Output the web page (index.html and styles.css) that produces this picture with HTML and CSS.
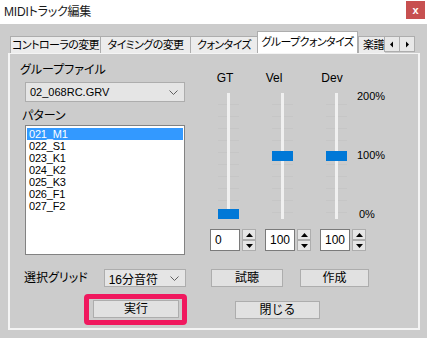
FILE: index.html
```html
<!DOCTYPE html>
<html lang="ja">
<head>
    <meta charset="UTF-8">
    <meta name="viewport" content="width=device-width, initial-scale=1.0">
    <title>MIDIトラック編集</title>
    <link rel="stylesheet" href="styles.css">
</head>
<body>
    <div class="titlebar">
        <span class="title">MIDIトラック編集</span>
        <span class="close">x</span>
    </div>

    <div class="window-body">
        <div class="tabstrip">
            <div class="tabs">
                <div class="tab">コントローラの変更</div>
                <div class="tab">タイミングの変更</div>
                <div class="tab">クォンタイズ</div>
                <div class="tab active">グループクォンタイズ</div>
                <div class="tab">楽譜</div>
            </div>
            <div class="tab-scroll">
                <span class="scroll-btn"><svg width="6" height="7" viewBox="0 0 6 7"><polygon points="4,0.5 4,6.5 1,3.5" fill="#000"/></svg></span>
                <span class="scroll-btn"><svg width="6" height="7" viewBox="0 0 6 7"><polygon points="2,0.5 2,6.5 5,3.5" fill="#000"/></svg></span>
            </div>
        </div>

        <div class="panel">
            <div class="file-col">
                <div class="label">グループファイル</div>
                <div class="combo file-combo">
                    <span>02_068RC.GRV</span>
                    <svg width="9" height="5" viewBox="0 0 9 5"><polyline points="0.5,0.5 4.5,4.5 8.5,0.5" fill="none" stroke="#606060"/></svg>
                </div>
                <div class="label pattern-label">パターン</div>
                <ul class="pattern-list">
                    <li class="selected">021_M1</li>
                    <li>022_S1</li>
                    <li>023_K1</li>
                    <li>024_K2</li>
                    <li>025_K3</li>
                    <li>026_F1</li>
                    <li>027_F2</li>
                </ul>
            </div>

            <div class="slider-col">
                <div class="slider-labels">
                    <span class="slider-name">GT</span>
                    <span class="slider-name">Vel</span>
                    <span class="slider-name">Dev</span>
                </div>
                <div class="sliders">
                    <div class="slider"><span class="thumb" style="top: 116px"></span></div>
                    <div class="slider"><span class="thumb" style="top: 58px"></span></div>
                    <div class="slider"><span class="thumb" style="top: 58px"></span></div>
                    <div class="scale">
                        <span>200%</span>
                        <span>100%</span>
                        <span>0%</span>
                    </div>
                </div>
                <div class="spins">
                    <div class="spin">
                        <span class="spin-value">0</span>
                        <span class="spin-btns">
                            <span class="spin-btn"><svg width="7" height="4" viewBox="0 0 7 4"><polygon points="0,4 7,4 3.5,0" fill="#000"/></svg></span>
                            <span class="spin-btn"><svg width="7" height="4" viewBox="0 0 7 4"><polygon points="0,0 7,0 3.5,4" fill="#000"/></svg></span>
                        </span>
                    </div>
                    <div class="spin">
                        <span class="spin-value">100</span>
                        <span class="spin-btns">
                            <span class="spin-btn"><svg width="7" height="4" viewBox="0 0 7 4"><polygon points="0,4 7,4 3.5,0" fill="#000"/></svg></span>
                            <span class="spin-btn"><svg width="7" height="4" viewBox="0 0 7 4"><polygon points="0,0 7,0 3.5,4" fill="#000"/></svg></span>
                        </span>
                    </div>
                    <div class="spin">
                        <span class="spin-value">100</span>
                        <span class="spin-btns">
                            <span class="spin-btn"><svg width="7" height="4" viewBox="0 0 7 4"><polygon points="0,4 7,4 3.5,0" fill="#000"/></svg></span>
                            <span class="spin-btn"><svg width="7" height="4" viewBox="0 0 7 4"><polygon points="0,0 7,0 3.5,4" fill="#000"/></svg></span>
                        </span>
                    </div>
                </div>
            </div>

            <div class="grid-row">
                <span class="label">選択グリッド</span>
                <div class="combo grid-combo">
                    <span>16分音符</span>
                    <svg width="9" height="5" viewBox="0 0 9 5"><polyline points="0.5,0.5 4.5,4.5 8.5,0.5" fill="none" stroke="#606060"/></svg>
                </div>
            </div>
            <div class="btn-row">
                <button type="button" class="btn btn-listen">試聴</button>
                <button type="button" class="btn btn-create">作成</button>
            </div>

            <div class="run-row">
                <span class="highlight">
                    <button type="button" class="btn btn-run">実行</button>
                </span>
            </div>
            <div class="close-row">
                <button type="button" class="btn btn-close">閉じる</button>
            </div>
        </div>
    </div>
</body>
</html>
```

FILE: styles.css
```css
body {
    margin: 0;
    width: 427px;
    height: 338px;
    overflow: hidden;
    background-color: #cccccc;
    color: #000;
    font-family: 'Liberation Sans', 'Noto Sans CJK JP', sans-serif;
    font-size: 12px;
    font-feature-settings: "palt";
}

.titlebar {
    height: 24px;
    background-color: #fff;
    display: flex;
    justify-content: space-between;
    align-items: flex-start;
}

.title {
    padding-left: 4px;
    line-height: 24px;
    font-size: 12px;
    letter-spacing: -0.2px;
    color: #1a1a1a;
}

.close {
    width: 19px;
    height: 18px;
    margin: 1px 2px 0 0;
    background-color: #c75050;
    color: #fff;
    font-size: 11px;
    font-weight: bold;
    display: flex;
    justify-content: center;
    align-items: center;
}

.window-body {
    padding: 7px 7px 0 8px;
}

/* tab strip */
.tabstrip {
    height: 22px;
    display: flex;
    align-items: flex-end;
    padding-left: 2px;
}

.tabs {
    width: 375px;
    height: 22px;
    display: flex;
    align-items: flex-end;
    overflow: hidden;
}

.tab {
    flex: none;
    height: 17px;
    line-height: 17px;
    box-sizing: border-box;
    border: 1px solid #adadad;
    border-bottom: none;
    border-right: none;
    background-color: #ececec;
    text-align: center;
    font-size: 11px;
    letter-spacing: -0.6px;
    white-space: nowrap;
}

.tab:nth-child(1) { width: 90px; }
.tab:nth-child(2) { width: 90px; }
.tab:nth-child(3) { width: 67px; }
.tab:nth-child(4) { width: 101px; }
.tab:nth-child(5) { width: 40px; text-align: left; padding-left: 4px; }

.tab.active {
    height: 22px;
    line-height: 20px;
    background-color: #fff;
    border-right: 1px solid #adadad;
}

.tab-scroll {
    display: flex;
    margin-bottom: 1px;
}

.scroll-btn {
    width: 16px;
    height: 16px;
    box-sizing: border-box;
    border: 1px solid #adadad;
    background-color: #e8e8e8;
    display: flex;
    justify-content: center;
    align-items: center;
    margin-left: -1px;
}

/* panel */
.panel {
    height: 277px;
    box-sizing: border-box;
    border: 2px solid #f4f4f4;
    border-top: 1px solid #f4f4f4;
    padding-left: 10px;
    display: grid;
    grid-template-columns: 166px 1fr;
    grid-template-rows: auto auto auto;
    column-gap: 24px;
    align-items: start;
}

.label {
    line-height: 16px;
    white-space: nowrap;
}

.file-col {
    padding-top: 8px;
}

.combo {
    height: 20px;
    box-sizing: border-box;
    border: 1px solid #adadad;
    background-color: #e5e5e5;
    display: flex;
    justify-content: space-between;
    align-items: center;
    padding: 0 6px 0 4px;
    font-size: 11px;
}

.file-combo {
    margin: 4px 1px 0 5px;
}

.pattern-label {
    margin-top: 6px;
    padding-left: 2px;
}

.pattern-list {
    list-style: none;
    margin: 1px 1px 0 5px;
    padding: 2px 1px;
    height: 130px;
    box-sizing: border-box;
    border: 1px solid #828282;
    background-color: #fff;
}

.pattern-list li {
    height: 12px;
    line-height: 12px;
    font-size: 11px;
    letter-spacing: -0.2px;
    padding-left: 2px;
}

.pattern-list li.selected {
    background-color: #3399ff;
    color: #fff;
}

/* sliders */
.slider-col {
    padding-top: 16px;
}

.slider-labels {
    display: flex;
    height: 16px;
    line-height: 16px;
}

.slider-name {
    width: 30px;
    text-align: center;
}

.slider-name:nth-child(2) { margin-left: 19px; }
.slider-name:nth-child(3) { margin-left: 28px; }

.sliders {
    display: flex;
    margin-top: 7px;
    padding-left: 8px;
    height: 126px;
}

.slider {
    position: relative;
    width: 21px;
    height: 126px;
    margin-right: 33px;
    background-image: repeating-linear-gradient(to bottom, transparent 0, transparent 11px, #c6c6c6 11px, #c6c6c6 12px);
}

.slider:nth-child(3) { margin-right: 10px; }

.slider::before {
    content: "";
    position: absolute;
    left: 9px;
    top: 0;
    width: 3px;
    height: 126px;
    background-color: #f0f0f0;
}

.thumb {
    position: absolute;
    left: 0;
    width: 21px;
    height: 10px;
    background-color: #0078d7;
}

.scale {
    display: flex;
    flex-direction: column;
    justify-content: space-between;
    height: 130px;
    margin-top: -3px;
    line-height: 12px;
    font-size: 11px;
}

.scale span:last-child {
    padding-left: 2px;
}

.spins {
    display: flex;
    margin-top: 10px;
    gap: 9px;
}

.spin {
    display: flex;
}

.spin-value {
    width: 30px;
    height: 22px;
    box-sizing: border-box;
    border: 1px solid #7a7a7a;
    background-color: #fff;
    line-height: 20px;
    padding-left: 4px;
    font-size: 12px;
}

.spin-btns {
    display: flex;
    flex-direction: column;
    margin-left: 2px;
}

.spin-btn {
    width: 14px;
    height: 11px;
    box-sizing: border-box;
    border: 1px solid #adadad;
    background-color: #e5e5e5;
    display: flex;
    justify-content: center;
    align-items: center;
}

/* bottom rows */
.grid-row {
    margin-top: 11px;
    display: flex;
    align-items: center;
    padding-left: 4px;
}

.grid-combo {
    width: 83px;
    height: 18px;
    margin-left: 16px;
    font-size: 12px;
}

.btn-row {
    margin-top: 11px;
    display: flex;
    gap: 17px;
    padding-left: 1px;
}

.btn {
    height: 18px;
    box-sizing: border-box;
    border: 1px solid #adadad;
    background-color: #e1e1e1;
    font-family: inherit;
    font-size: 12px;
    padding: 0;
    line-height: 16px;
    color: #000;
}

.btn-listen { width: 72px; }
.btn-create { width: 69px; }

.run-row {
    margin-top: 4px;
    padding-left: 64px;
}

.highlight {
    display: inline-flex;
    width: 103px;
    height: 31px;
    box-sizing: border-box;
    border: 5px solid #f0185e;
    border-radius: 4px;
    padding: 1px 3px 1px 4px;
}

.btn-run { width: 86px; }

.close-row {
    margin-top: 11px;
    padding-left: 25px;
}

.btn-close { width: 85px; }
```
